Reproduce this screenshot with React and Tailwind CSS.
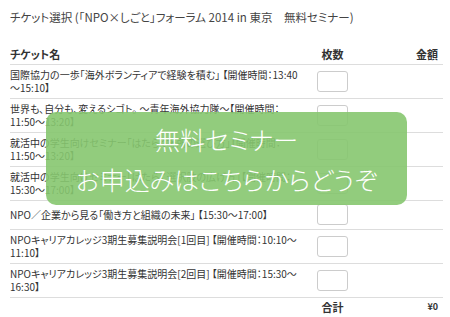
const font = { fontFamily: '"Noto Sans CJK JP", "Liberation Sans", sans-serif' }

const tickets = [
  ['国際協力の一歩「海外ボランティアで経験を積む」 【開催時間：13:40', '～15:10】'],
  ['世界も、自分も、変えるシゴト。 ～青年海外協力隊～【開催時間：', '11:50～13:20】'],
  ['就活中の学生向けセミナー「はたらく場所の選び方」【開催時間：', '11:50～13:20】'],
  ['就活中の学生向けセミナー「はたらく選択肢の広げ方」【開催時間：', '15:30～17:00】'],
  ['NPO／企業から見る「働き方と組織の未来」 【15:30～17:00】'],
  ['NPOキャリアカレッジ3期生募集説明会[1回目] 【開催時間：10:10～', '11:10】'],
  ['NPOキャリアカレッジ3期生募集説明会[2回目] 【開催時間：15:30～', '16:30】']
]

export default function App() {
  return (
    <div
      className="relative h-[317px] w-[450px] overflow-hidden bg-white px-[10px] text-[#333] [font-feature-settings:'palt']"
      style={font}
    >
      <h1 className="pt-[9px] text-[11.5px] leading-[16px] font-normal text-[#444]">
        チケット選択 (「NPO×しごと」フォーラム 2014 in 東京　無料セミナー)
      </h1>

      <table className="mt-[18px] w-[433px] table-fixed border-collapse text-[11px]">
        <thead>
          <tr className="h-[21px] border-b border-[#ddd] font-bold">
            <th className="w-[300px] pt-[1px] text-left align-middle">チケット名</th>
            <th className="w-[45px] pt-[1px] text-center">枚数</th>
            <th className="pt-[1px] pr-[5px] text-right">金額</th>
          </tr>
        </thead>
        <tbody>
          {tickets.map((lines, i) => (
            <tr key={i} className="border-b border-[#ddd]">
              <td className="py-[3.5px] align-middle text-[10px] leading-[13px] whitespace-nowrap">
                {lines.map((l, j) => (
                  <div key={j}>{l}</div>
                ))}
              </td>
              <td className="py-[3.5px] text-center align-middle">
                <div className="mx-auto h-[21px] w-[31px] rounded-[3px] border border-[#ccc] bg-white" />
              </td>
              <td />
            </tr>
          ))}
          <tr className="font-bold leading-[14px]">
            <td />
            <td className="pt-[2px] text-center">合計</td>
            <td className="pt-[2px] pr-[5px] text-right text-[9px]">¥0</td>
          </tr>
        </tbody>
      </table>

      <div className="absolute top-[112px] left-[46px] flex h-[93px] w-[361px] flex-col items-center justify-center rounded-[10px] bg-[#86c66f]/90 text-[25px] leading-[40px] font-light text-white">
        <div>無料セミナー</div>
        <div>お申込みはこちらからどうぞ</div>
      </div>
    </div>
  )
}
